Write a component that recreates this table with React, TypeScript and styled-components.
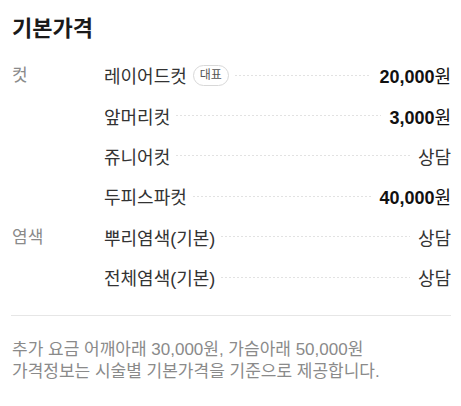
import styled, { createGlobalStyle } from "styled-components";

const GlobalStyle = createGlobalStyle`
  body {
    margin: 0;
    background: #fff;
    font-family: "Liberation Sans", "Noto Sans CJK KR", sans-serif;
  }
`;

const Section = styled.section`
  padding: 14px 10px 0 12px;
`;

const Title = styled.h2`
  margin: 0;
  font-size: 22px;
  line-height: 30px;
  font-weight: 700;
  color: #1a1a1a;
`;

const Groups = styled.div`
  margin-top: 11px;
`;

const Group = styled.div`
  display: flex;
`;

const Category = styled.div`
  width: 92px;
  flex-shrink: 0;
  font-size: 17px;
  line-height: 42px;
  color: #8a8a8a;
`;

const Items = styled.ul`
  flex: 1;
  margin: 0;
  padding: 0;
  list-style: none;
`;

const Row = styled.li`
  display: flex;
  align-items: center;
  height: 40.4px;
`;

const Name = styled.span`
  font-size: 18px;
  color: #333;
  white-space: nowrap;
`;

const Badge = styled.span`
  margin-left: 6px;
  padding: 0 6px;
  height: 19px;
  line-height: 19px;
  border: 1px solid #d8d8d8;
  border-radius: 11px;
  font-size: 12px;
  color: #555;
`;

const Leader = styled.span`
  flex: 1;
  height: 1px;
  margin: 0 8px 0 6px;
  background-image: linear-gradient(to right, #e2e2e2 50%, transparent 50%);
  background-size: 4px 1px;
`;

const Price = styled.span<{ $bold?: boolean }>`
  font-size: 18px;
  white-space: nowrap;
  color: ${(p) => (p.$bold ? "#111" : "#333")};
  font-weight: ${(p) => (p.$bold ? 700 : 400)};
`;

const Won = styled.span`
  font-weight: 400;
`;

const Divider = styled.hr`
  margin: 18px 0 0 -1px;
  border: 0;
  border-top: 1px solid #e6e6e6;
`;

const Note = styled.p`
  margin: 23px 0 0;
  font-size: 17px;
  line-height: 22px;
  color: #8a8a8a;
`;

type Item = { name: string; price?: number; badge?: string };

const groups: { category: string; items: Item[] }[] = [
  {
    category: "컷",
    items: [
      { name: "레이어드컷", price: 20000, badge: "대표" },
      { name: "앞머리컷", price: 3000 },
      { name: "쥬니어컷" },
      { name: "두피스파컷", price: 40000 },
    ],
  },
  {
    category: "염색",
    items: [{ name: "뿌리염색(기본)" }, { name: "전체염색(기본)" }],
  },
];

export default function App() {
  return (
    <>
      <GlobalStyle />
      <Section>
        <Title>기본가격</Title>
        <Groups>
          {groups.map((g) => (
            <Group key={g.category}>
              <Category>{g.category}</Category>
              <Items>
                {g.items.map((it) => (
                  <Row key={it.name}>
                    <Name>{it.name}</Name>
                    {it.badge && <Badge>{it.badge}</Badge>}
                    <Leader />
                    {it.price ? (
                      <Price $bold>
                        {it.price.toLocaleString("en-US")}
                        <Won>원</Won>
                      </Price>
                    ) : (
                      <Price>상담</Price>
                    )}
                  </Row>
                ))}
              </Items>
            </Group>
          ))}
        </Groups>
        <Divider />
        <Note>
          추가 요금 어깨아래 30,000원, 가슴아래 50,000원
          <br />
          가격정보는 시술별 기본가격을 기준으로 제공합니다.
        </Note>
      </Section>
    </>
  );
}
